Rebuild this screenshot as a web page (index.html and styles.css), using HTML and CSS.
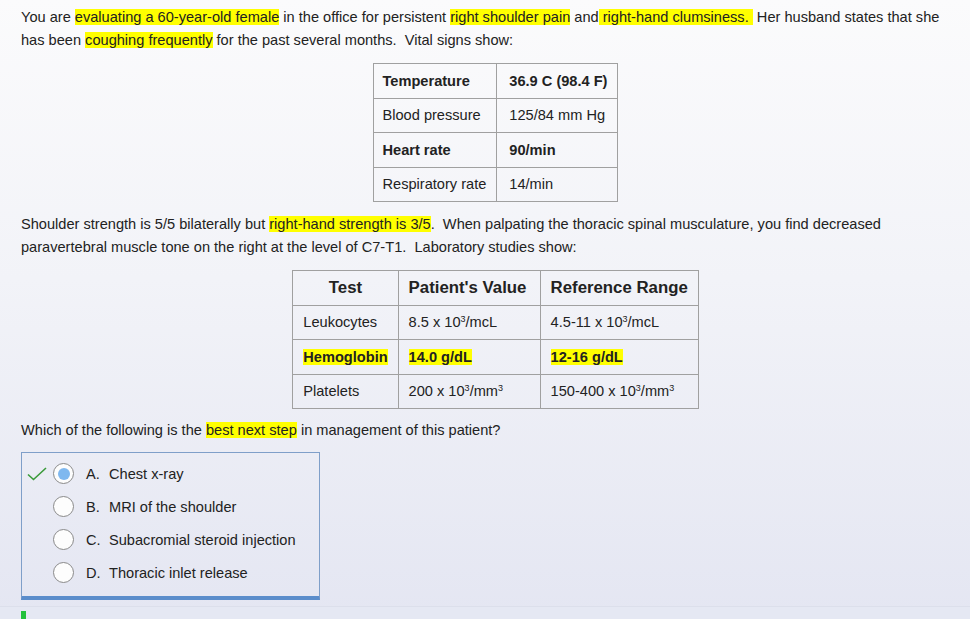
FILE: index.html
```html
<!DOCTYPE html>
<html>
<head>
<meta charset="utf-8">
<link rel="stylesheet" href="styles.css">
</head>
<body>
<div class="page">
  <div class="content">
    <p class="para">You are <span class="hl">evaluating a 60-year-old female</span> in the office for persistent <span class="hl">right shoulder pain</span> and<span class="hl"> right-hand clumsiness. </span>&nbsp;Her husband states that she has been <span class="hl">coughing frequently</span> for the past several months.&nbsp; Vital signs show:</p>
    <table class="vitals">
      <tr class="bold"><td class="c1">Temperature</td><td class="c2">36.9 C (98.4 F)</td></tr>
      <tr><td class="c1">Blood pressure</td><td class="c2">125/84 mm Hg</td></tr>
      <tr class="bold"><td class="c1">Heart rate</td><td class="c2">90/min</td></tr>
      <tr><td class="c1">Respiratory rate</td><td class="c2">14/min</td></tr>
    </table>
    <p class="para para2">Shoulder strength is 5/5 bilaterally but <span class="hl">right-hand strength is 3/5</span>.&nbsp; When palpating the thoracic spinal musculature, you find decreased paravertebral muscle tone on the right at the level of C7-T1.&nbsp; Laboratory studies show:</p>
    <table class="labs">
      <tr class="head"><th class="l1">Test</th><th class="l2">Patient's Value</th><th class="l3">Reference Range</th></tr>
      <tr><td>Leukocytes</td><td>8.5 x 10<sup>3</sup>/mcL</td><td>4.5-11 x 10<sup>3</sup>/mcL</td></tr>
      <tr class="bold"><td><span class="hl">Hemoglobin</span></td><td><span class="hl">14.0 g/dL</span></td><td><span class="hl">12-16 g/dL</span></td></tr>
      <tr><td>Platelets</td><td>200 x 10<sup>3</sup>/mm<sup>3</sup></td><td>150-400 x 10<sup>3</sup>/mm<sup>3</sup></td></tr>
    </table>
    <p class="para question">Which of the following is the <span class="hl">best next step</span> in management of this patient?</p>
    <div class="answers">
      <div class="option">
        <span class="mark"><svg width="22" height="16" viewBox="0 0 22 16"><path d="M2 8.5 L7.5 13.5 L20 2" fill="none" stroke="#3a9a3a" stroke-width="1.6"/></svg></span>
        <span class="radio selected"><span class="dot"></span></span>
        <span class="letter">A.</span><span class="text">Chest x-ray</span>
      </div>
      <div class="option">
        <span class="mark"></span>
        <span class="radio"></span>
        <span class="letter">B.</span><span class="text">MRI of the shoulder</span>
      </div>
      <div class="option">
        <span class="mark"></span>
        <span class="radio"></span>
        <span class="letter">C.</span><span class="text">Subacromial steroid injection</span>
      </div>
      <div class="option">
        <span class="mark"></span>
        <span class="radio"></span>
        <span class="letter">D.</span><span class="text">Thoracic inlet release</span>
      </div>
    </div>
  </div>
  <div class="footer">
    <span class="progress"></span>
  </div>
</div>
</body>
</html>
```

FILE: styles.css
```css
html, body {
  margin: 0;
  padding: 0;
}
body {
  width: 970px;
  height: 619px;
  overflow: hidden;
  font-family: "Liberation Sans", Arial, sans-serif;
  font-size: 14.6px;
  color: #222;
  background: linear-gradient(to bottom, #fbfbfc 0%, #f2f3f8 45%, #e4e6f2 100%);
}
.page {
  height: 619px;
  display: flex;
  flex-direction: column;
}
.content {
  padding: 6px 0 0 21px;
  height: 601px;
  box-sizing: border-box;
}
.para {
  margin: 0;
  padding-right: 20px;
  line-height: 23px;
}
.hl {
  background: #ffff00;
}
table {
  border-collapse: collapse;
  margin-left: auto;
  margin-right: auto;
}
td, th {
  border: 1px solid #a0a0a0;
  padding: 0 10px 0 9px;
  height: 33.5px;
  text-align: left;
  white-space: nowrap;
}
.vitals {
  margin-top: 11px;
}
.vitals .c1 { width: 102px; }
.vitals .c2 { width: 98px; padding-left: 12px; }
.bold td { font-weight: bold; }
.para2 {
  margin-top: 11px;
}
.labs {
  margin-top: 11px;
}
.labs th {
  font-size: 16.8px;
  font-weight: bold;
  padding: 0 10px;
}
.labs .l1 { width: 84px; text-align: center; }
.labs .l2 { width: 121px; }
.labs .l3 { width: 137px; }
.labs td {
  padding: 0 10px 0 10px;
}
sup {
  font-size: 9px;
  line-height: 0;
  vertical-align: 5px;
}
.question {
  margin-top: 10px;
}
.answers {
  margin-top: 10px;
  width: 299px;
  height: 148px;
  box-sizing: border-box;
  border: 1px solid #7f9fc9;
  border-bottom: 4px solid #5b8dcb;
  padding-top: 4px;
}
.option {
  height: 33px;
  display: flex;
  align-items: center;
}
.mark {
  width: 31px;
  display: flex;
  justify-content: flex-end;
}
.mark svg { margin-right: 5px; }
.radio {
  width: 19px;
  height: 19px;
  border: 1px solid #8a8a8a;
  border-radius: 50%;
  background: #fdfdfd;
  display: flex;
  align-items: center;
  justify-content: center;
  flex: none;
}
.dot {
  width: 12px;
  height: 12px;
  border-radius: 50%;
  background: #7fb8ef;
}
.letter {
  margin-left: 12px;
  width: 23px;
}
.footer {
  flex: 1;
  border-top: 1px solid #dcdfeb;
  margin-top: 5px;
  padding-left: 21px;
  display: flex;
  align-items: flex-end;
  background: #e5e8f3;
}
.progress {
  width: 5px;
  height: 8px;
  background: #22c13b;
}
```
